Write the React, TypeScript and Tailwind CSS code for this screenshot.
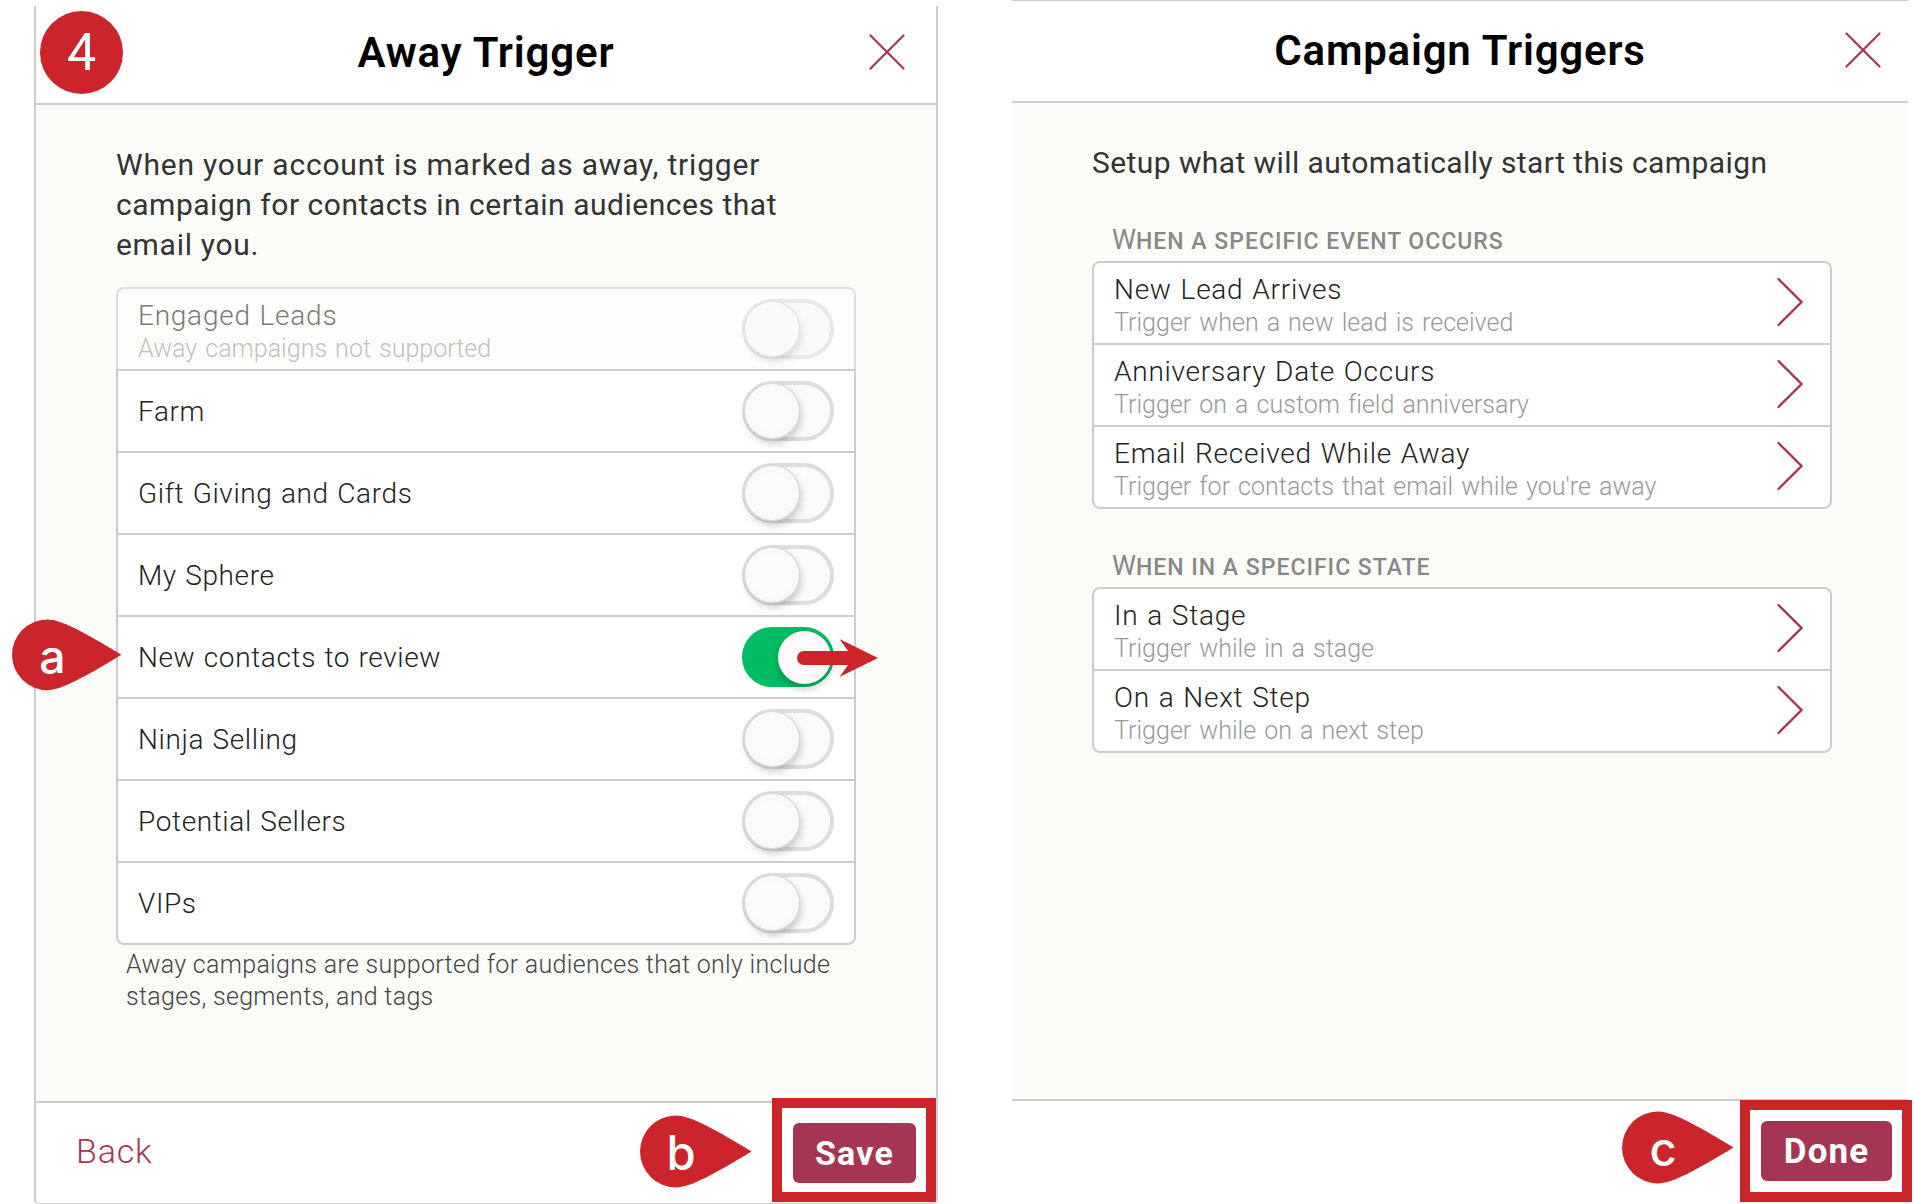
import React from 'react'
import clsx from 'clsx'

const audiences = [
  { name: 'Engaged Leads', note: 'Away campaigns not supported', disabled: true },
  { name: 'Farm' },
  { name: 'Gift Giving and Cards' },
  { name: 'My Sphere' },
  { name: 'New contacts to review', on: true },
  { name: 'Ninja Selling' },
  { name: 'Potential Sellers' },
  { name: 'VIPs' },
]

const triggerGroups = [
  {
    initial: 'W',
    rest: 'hen a specific event occurs',
    items: [
      { name: 'New Lead Arrives', note: 'Trigger when a new lead is received' },
      { name: 'Anniversary Date Occurs', note: 'Trigger on a custom field anniversary' },
      { name: 'Email Received While Away', note: "Trigger for contacts that email while you're away" },
    ],
  },
  {
    initial: 'W',
    rest: 'hen in a specific state',
    items: [
      { name: 'In a Stage', note: 'Trigger while in a stage' },
      { name: 'On a Next Step', note: 'Trigger while on a next step' },
    ],
  },
]

function CloseIcon() {
  return (
    <svg width="36" height="36" viewBox="0 0 36 36" fill="none" stroke="#a53653" strokeWidth="2.2" strokeLinecap="round">
      <path d="M1.5 1.5 34.5 34.5M34.5 1.5 1.5 34.5" />
    </svg>
  )
}

function Chevron() {
  return (
    <svg width="26" height="50" viewBox="0 0 26 50" fill="none" stroke="#a53653" strokeWidth="2.3" strokeLinecap="round">
      <path d="M1.5 2 24.5 25 1.5 48" />
    </svg>
  )
}

function Toggle({ on }: { on?: boolean }) {
  return (
    <span
      className={clsx(
        'flex h-[60px] w-[92px] items-center rounded-full border-4',
        on ? 'justify-end border-[#00bd63] bg-[#00bd63]' : 'border-[#dddddd] bg-[#fcfafc]'
      )}
    >
      <span
        className={clsx(
          'rounded-full bg-radial from-[#fcfafc] from-50% to-[#f6f6f6]',
          on
            ? 'mr-[-1px] size-[53px] shadow-[0_4px_8px_rgba(0,0,0,0.25)]'
            : 'ml-[-1px] size-[54px] shadow-[0_0_0_1.5px_#d9d9d9,2px_5px_9px_rgba(0,0,0,0.22)]'
        )}
      />
    </span>
  )
}

type RowProps = {
  name: string
  note?: string
  disabled?: boolean
  children: React.ReactNode
}

function Row({ name, note, disabled, children }: RowProps) {
  return (
    <li
      className={clsx(
        'flex h-[82px] items-center justify-between border-x-2 border-t-2 border-[#cccccc] bg-white pl-5 first:rounded-t-lg last:h-[84px] last:rounded-b-lg last:border-b-2',
        disabled && 'opacity-60'
      )}
    >
      <div className={clsx('whitespace-nowrap', note ? 'pt-[11px] pb-1' : 'pt-0.5')}>
        <div
          className={clsx(
            'text-[28px] leading-8 font-light text-[#222222]',
            note ? 'tracking-[0.75px] [word-spacing:1.3px]' : 'tracking-[0.62px] [word-spacing:1px]'
          )}
        >
          {name}
        </div>
        {note && (
          <div className="text-[25px] leading-[33px] font-light tracking-[0.02px] text-[#999999] [word-spacing:1.9px]">
            {note}
          </div>
        )}
      </div>
      {children}
    </li>
  )
}

function Pointer({ letter, className }: { letter: string; className: string }) {
  return (
    <svg viewBox="0 0 110 71" className={clsx('absolute', className)}>
      <path d="M36 .5C50 .5 73 13.500 109.500 35.500 73 57.500 50 70.500 36 70.500A35 35 0 0 1 36 .5Z" fill="#cc242b" />
      <text x="41" y="54" textAnchor="middle" fill="#fff" className="font-[Inter] text-[46px] font-medium">
        {letter}
      </text>
    </svg>
  )
}

function AwayTrigger() {
  return (
    <section className="mt-1.5 ml-[34px] flex h-[1198px] w-[904px] flex-col rounded-b-[5px] border-x-2 border-b border-[#cccccc]">
      <header className="flex h-[99px] items-center justify-between border-b-2 border-[#cccccc] px-[31px] pb-[5px]">
        <div className="w-9" />
        <h1 className="text-[42px] font-semibold tracking-[0.85px] text-black">Away Trigger</h1>
        <CloseIcon />
      </header>

      <main className="flex-1 bg-[#fbfcf7] px-20 pt-10">
        <p className="text-[30px] leading-10 whitespace-nowrap text-[#333333]">
          <span className="block tracking-[0.8px]">When your account is marked as away, trigger</span>
          <span className="block tracking-[0.52px]">campaign for contacts in certain audiences that</span>
          <span className="block tracking-[0.7px]">email you.</span>
        </p>
        <ul className="mt-[22px]">
          {audiences.map((a) => (
            <Row key={a.name} name={a.name} note={a.note} disabled={a.disabled}>
              <div className="pr-5">
                <Toggle on={a.on} />
              </div>
            </Row>
          ))}
        </ul>
        <p className="mt-1 pl-2.5 text-[25px] leading-8 font-light tracking-[0.31px] text-[#444444]">
          Away campaigns are supported for audiences that only include
          <br />
          stages, segments, and tags
        </p>
      </main>

      <footer className="flex h-[102px] items-center justify-between border-t-2 border-[#cccccc] pr-5 pl-10">
        <button className="pb-1 text-[34px] font-light tracking-[0.8px] text-[#a53653]">Back</button>
        <button className="h-[60px] w-[123px] rounded-md bg-[#a53653] text-[34px] font-bold tracking-[1.2px] text-white">
          Save
        </button>
      </footer>
    </section>
  )
}

function CampaignTriggers() {
  return (
    <section className="ml-[74px] flex h-[1201px] w-[896px] flex-col border-t border-[#cccccc]">
      <header className="flex h-[102px] items-center justify-between border-b-2 border-[#cccccc] px-[27px] pb-[2px]">
        <div className="w-9" />
        <h1 className="text-[42px] font-semibold tracking-[0.8px] text-black">Campaign Triggers</h1>
        <CloseIcon />
      </header>

      <main className="flex-1 bg-[#fbfcf7] pt-10 pl-20">
        <p className="text-[30px] leading-10 tracking-[0.42px] text-[#333333]">
          Setup what will automatically start this campaign
        </p>
        {triggerGroups.map((group) => (
          <div key={group.rest} className="w-[740px] pt-[41px]">
            <h2 className="mb-[5px] h-8 pl-5 text-[27px] leading-[33px] text-[#888888]">
              {group.initial}
              <span className="text-[23px] leading-none font-medium tracking-[1px] uppercase">{group.rest}</span>
            </h2>
            <ul>
              {group.items.map((item) => (
                <Row key={item.name} name={item.name} note={item.note}>
                  <div className="pr-[27px] pb-0.5">
                    <Chevron />
                  </div>
                </Row>
              ))}
            </ul>
          </div>
        ))}
      </main>

      <footer className="flex h-[102px] items-center justify-end border-t-2 border-[#cccccc] pr-4">
        <button className="h-[60px] w-[131px] rounded-md bg-[#a53653] pt-0.5 text-[35px] font-bold tracking-[1.1px] text-white">
          Done
        </button>
      </footer>
    </section>
  )
}

export default function App() {
  return (
    <div className="relative flex h-[1204px] w-[1914px] items-start overflow-hidden bg-white font-[Roboto,sans-serif]">
      <AwayTrigger />
      <CampaignTriggers />

      {/* step callouts drawn over the two dialogs */}
      <div className="absolute top-[11px] left-10 flex size-[83px] items-center justify-center rounded-full bg-[#cc242b] text-[52px] text-white">
        4
      </div>
      <Pointer letter="a" className="top-[619px] left-[11px] w-[111px]" />
      <Pointer letter="b" className="top-[1115px] left-[639px] w-[113px]" />
      <Pointer letter="c" className="top-[1111px] left-[1621px] w-[113px]" />
      <svg width="82" height="40" viewBox="0 0 82 40" className="absolute top-[638px] left-[796px]">
        <path d="M8 13H52L43.500 1 82 20 43.500 39 52 27H8A7 7 0 0 1 8 13Z" fill="#cc242b" />
      </svg>
      <div className="absolute top-[1098px] left-[772px] h-[104px] w-[164px] border-[10px] border-[#cc242b]" />
      <div className="absolute top-[1100px] left-[1740px] h-[102px] w-[172px] border-[10px] border-[#cc242b]" />
    </div>
  )
}
